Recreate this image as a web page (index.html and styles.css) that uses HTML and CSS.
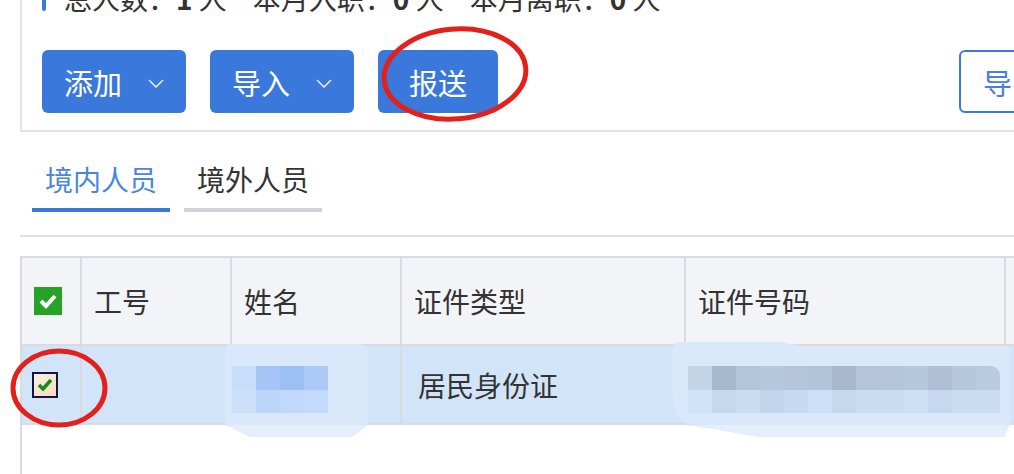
FILE: index.html
```html
<!DOCTYPE html>
<html lang="zh-CN">
<head>
    <meta charset="UTF-8">
    <meta name="viewport" content="width=device-width, initial-scale=1.0">
    <title>人员信息采集</title>
    <link rel="stylesheet" href="styles.css">
</head>
<body>
<div class="page">

    <!-- Summary + toolbar -->
    <section class="panel">
        <div class="summary">
            <span class="mark"></span>
            <span class="stat">总人数：<b>1</b> 人</span>
            <span class="stat">本月入职：<b>0</b> 人</span>
            <span class="stat">本月离职：<b>0</b> 人</span>
        </div>
        <div class="toolbar">
            <button class="btn">添加
                <svg class="chev" width="16" height="9" viewBox="0 0 16 9"><polyline points="1,1 8,8 15,1"/></svg>
            </button>
            <button class="btn">导入
                <svg class="chev" width="16" height="9" viewBox="0 0 16 9"><polyline points="1,1 8,8 15,1"/></svg>
            </button>
            <button class="btn btn-plain">报送</button>
            <button class="btn btn-outline">导出
                <svg class="chev" width="16" height="9" viewBox="0 0 16 9"><polyline points="1,1 8,8 15,1"/></svg>
            </button>
        </div>
    </section>

    <!-- Tabs -->
    <nav class="tabs">
        <a class="tab active">境内人员</a>
        <a class="tab">境外人员</a>
    </nav>

    <!-- Staff table -->
    <section class="list">
        <div class="grid">
            <div class="cell head check-cell">
                <span class="check-all">
                    <svg width="28" height="28" viewBox="0 0 28 28"><polyline points="7,14 12,19 21,9"/></svg>
                </span>
            </div>
            <div class="cell head">工号</div>
            <div class="cell head">姓名</div>
            <div class="cell head">证件类型</div>
            <div class="cell head">证件号码</div>
            <div class="cell head"></div>

            <div class="cell row check-cell row-check">
                <span class="check-one">
                    <svg width="22" height="22" viewBox="0 0 22 22"><polyline points="5,11 9,15 17,6"/></svg>
                </span>
            </div>
            <div class="cell row"></div>
            <div class="cell row"></div>
            <div class="cell row row-text">居民身份证</div>
            <div class="cell row"></div>
            <div class="cell row"></div>
        </div>
    </section>

    <!-- Mosaic blur and red marks drawn over the screenshot -->
    <svg class="marks" width="1014" height="474" viewBox="0 0 1014 474">
        <!-- name mosaic -->
        <path d="M230 344 H360 Q368 344 368 354 V424 L352 437 H250 L225 424 V354 Q225 344 230 344 Z" fill="#d9e8fa"/>
        <path d="M225 425 H368 L352 437 H250 Z" fill="#e5eefb"/>
        <rect x="232" y="366" width="24" height="24" fill="#c8ddf9"/>
        <rect x="256" y="366" width="24" height="24" fill="#a6c5f6"/>
        <rect x="280" y="366" width="24" height="24" fill="#9dc0f4"/>
        <rect x="304" y="366" width="24" height="24" fill="#adc9f7"/>
        <rect x="232" y="390" width="24" height="23" fill="#cde0fa"/>
        <rect x="256" y="390" width="24" height="23" fill="#bcd6fa"/>
        <rect x="280" y="390" width="24" height="23" fill="#c0d8fa"/>
        <rect x="304" y="390" width="24" height="23" fill="#c4dafa"/>

        <!-- id number mosaic -->
        <path d="M680 342 H782 L800 346 H1004 Q1010 346 1010 356 V424 L1004 437 H760 L687 424 Q672 420 672 380 V352 Q672 342 680 342 Z" fill="#d9e8fa"/>
        <path d="M687 425 H1010 L1004 437 H760 Z" fill="#e5eefb"/>
        <g>
            <rect x="688" y="366" width="24" height="24" fill="#c2d4e6"/>
            <rect x="712" y="366" width="24" height="24" fill="#a6b9cd"/>
            <rect x="736" y="366" width="24" height="24" fill="#b2c5d9"/>
            <rect x="760" y="366" width="24" height="24" fill="#b5c8dc"/>
            <rect x="784" y="366" width="24" height="24" fill="#b5c5d9"/>
            <rect x="808" y="366" width="24" height="24" fill="#b1c5d9"/>
            <rect x="832" y="366" width="24" height="24" fill="#a8b9cd"/>
            <rect x="856" y="366" width="24" height="24" fill="#b5c5d9"/>
            <rect x="880" y="366" width="24" height="24" fill="#b5c6da"/>
            <rect x="904" y="366" width="24" height="24" fill="#b5c8dc"/>
            <rect x="928" y="366" width="24" height="24" fill="#b0bfd3"/>
            <rect x="952" y="366" width="24" height="24" fill="#b5c8dc"/>
            <path d="M976 366 H990 Q1000 366 1000 378 V390 H976 Z" fill="#b8cbdf"/>
            <rect x="688" y="390" width="24" height="23" fill="#d0e3f7"/>
            <rect x="712" y="390" width="24" height="23" fill="#c5d8ec"/>
            <rect x="736" y="390" width="24" height="23" fill="#c9dcf0"/>
            <rect x="760" y="390" width="24" height="23" fill="#c1d5ec"/>
            <rect x="784" y="390" width="24" height="23" fill="#c5d9f0"/>
            <rect x="808" y="390" width="24" height="23" fill="#cde0f7"/>
            <rect x="832" y="390" width="24" height="23" fill="#c5d8ec"/>
            <rect x="856" y="390" width="24" height="23" fill="#c9dcf0"/>
            <rect x="880" y="390" width="24" height="23" fill="#c9dcf0"/>
            <rect x="904" y="390" width="24" height="23" fill="#cde0f4"/>
            <rect x="928" y="390" width="24" height="23" fill="#c5d8f0"/>
            <rect x="952" y="390" width="24" height="23" fill="#c9dcf0"/>
            <rect x="976" y="390" width="24" height="23" fill="#c9dcf0"/>
        </g>

        <!-- red circles -->
        <ellipse cx="455" cy="74" rx="71" ry="45" transform="rotate(-5 455 74)" class="ring"/>
        <ellipse cx="59" cy="388" rx="46" ry="37" class="ring"/>
    </svg>
</div>
</body>
</html>
```

FILE: styles.css
```css
/* Basic Reset */
* {
    margin: 0;
    padding: 0;
    box-sizing: border-box;
}

body {
    font-family: "Noto Sans CJK SC", "Noto Sans", sans-serif;
    color: #333;
    background: #fff;
    overflow: hidden;
}

.page {
    display: flow-root;
    position: relative;
    width: 1127px;
    height: 474px;
}

/* Summary panel */
.panel {
    margin: -20px 0 0 20px;
    padding-bottom: 17px;
    border-left: 2px solid #e2e2e2;
    border-bottom: 2px solid #e2e2e2;
}

.summary {
    display: flex;
    align-items: center;
    height: 36px;
    padding-left: 20px;
    font-size: 28px;
    line-height: 36px;
    gap: 26px;
}

.summary .mark {
    width: 4px;
    height: 26px;
    background: #3b78dc;
    border-radius: 2px;
    margin-right: -8px;
}

.summary b {
    font-weight: bold;
}

.toolbar {
    display: flex;
    align-items: center;
    gap: 24px;
    margin-top: 34px;
    padding: 0 20px;
}

.btn {
    display: flex;
    align-items: center;
    gap: 26px;
    height: 63px;
    padding: 0 22px;
    border: none;
    border-radius: 6px;
    background: #3b78dc;
    color: #fff;
    font-family: inherit;
    font-size: 29px;
    cursor: pointer;
}

.btn .chev {
    fill: none;
    stroke: #fff;
    stroke-width: 1.3;
    margin-top: 3px;
}

.btn-plain {
    padding: 0 31px;
}

.btn-outline {
    margin-left: auto;
    background: #fff;
    color: #4a7fdc;
    border: 2px solid #3c78d8;
}

.btn-outline .chev {
    stroke: #4a7fdc;
}

/* Tabs */
.tabs {
    display: flex;
    gap: 14px;
    margin-left: 20px;
    padding: 29px 0 23px 12px;
    border-bottom: 2px solid #e0e0e0;
}

.tab {
    padding: 0 13px 11px;
    font-size: 28px;
    line-height: 36px;
    color: #333;
    border-bottom: 4px solid #d2d2d8;
}

.tab.active {
    color: #4a86dc;
    border-bottom-color: #3b78dc;
}

/* Table */
.list {
    margin: 19px 0 0 20px;
    height: 240px;
    border-left: 2px solid #d9dbe1;
}

.grid {
    display: grid;
    grid-template-columns: 60px 150px 170px 284px 320px 120px;
    border-top: 2px solid #d9dbe1;
}

.cell {
    display: flex;
    align-items: center;
    padding-left: 12px;
    border-right: 2px solid #d9dbe1;
    border-bottom: 2px solid #d9dbe1;
    font-size: 28px;
    color: #333;
}

.cell.head {
    height: 88px;
    background: #f3f4f8;
}

.cell.row {
    height: 79px;
    background: #d2e4f8;
}

.row-text {
    padding-left: 16px;
}

.row-check {
    padding-left: 10px;
}

.check-all {
    display: block;
    width: 28px;
    height: 28px;
    background: #26a326;
}

.check-all svg {
    display: block;
    fill: none;
    stroke: #fff;
    stroke-width: 4;
}

.check-one {
    display: block;
    width: 26px;
    height: 26px;
    border: 2px solid #151545;
    background: linear-gradient(135deg, #fbf0de 0%, #f0dcc0 100%);
}

.check-one svg {
    display: block;
    fill: none;
    stroke: #188a18;
    stroke-width: 3.5;
}

/* Overlay marks */
.marks {
    position: absolute;
    top: 0;
    left: 0;
    pointer-events: none;
}

.ring {
    fill: none;
    stroke: #e3211c;
    stroke-width: 5;
}
```
